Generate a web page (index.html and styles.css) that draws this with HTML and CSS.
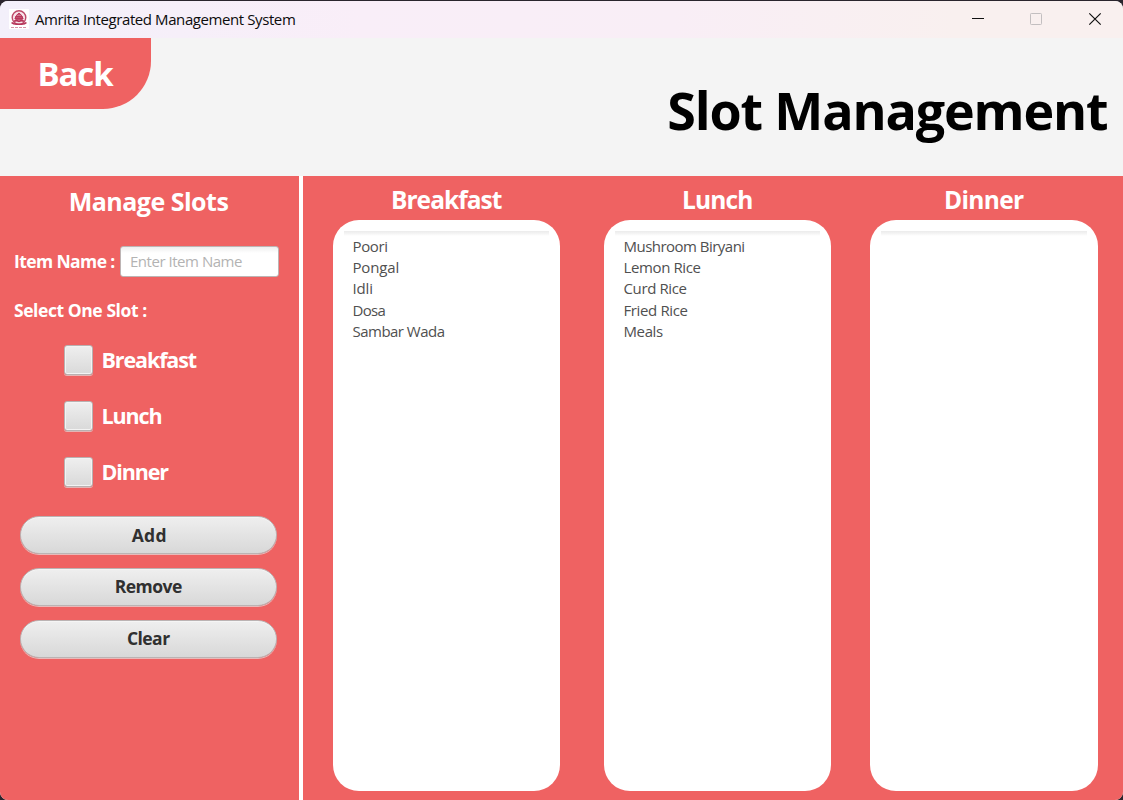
FILE: index.html
```html
<!DOCTYPE html>
<html lang="en">
<head>
<meta charset="utf-8">
<title>Amrita Integrated Management System</title>
<link rel="stylesheet" href="styles.css">
</head>
<body>
<div class="window">
  <header class="titlebar">
    <svg class="logo" width="20" height="20" viewBox="0 0 20 20">
      <rect width="20" height="20" fill="#fff"/>
      <circle cx="10" cy="8.600" r="6.800" fill="#f8e3e9" stroke="#bd4a69" stroke-width="1.400"/>
      <path d="M7 6.800 10 4l3 2.800M5.500 9.400h9M6.500 7.500h7v2.800h-7z" fill="#c25473" stroke="#b8375b" stroke-width="1"/>
      <path d="M5 12.200c2-.9 3.600-.7 5 .2 1.400-.9 3-1.100 5-.2M2.600 13.500c2 2.500 4.700 1.700 7.400 1.700s5.400.8 7.400-1.700" fill="none" stroke="#b5355a" stroke-width="1.600"/>
      <path d="M2 18.500h16" stroke="#d693a7" stroke-width="1" stroke-dasharray="3 1"/>
    </svg>
    <span class="app-name">Amrita Integrated Management System</span>
    <div class="controls">
      <svg width="14" height="14" viewBox="0 0 14 14"><path d="M1 6.500h12" stroke="#111" fill="none"/></svg>
      <svg width="14" height="14" viewBox="0 0 14 14"><rect x="1.500" y="1.500" width="11" height="11" rx=".8" stroke="#c3bfc0" fill="none"/></svg>
      <svg width="14" height="14" viewBox="0 0 14 14"><path d="M1.300 1.300l11.400 11.400M12.700 1.300L1.300 12.700" stroke="#111" stroke-width="1.200" fill="none"/></svg>
    </div>
  </header>
  <div class="banner">
    <button class="back">Back</button>
    <h1 class="page-title">Slot Management</h1>
  </div>
  <main class="content">
    <section class="manage">
      <h2 class="manage-title">Manage Slots</h2>
      <div class="field">
        <label class="label item-label" for="item">Item Name :</label>
        <input class="input" id="item" placeholder="Enter Item Name">
      </div>
      <p class="label select-label">Select One Slot :</p>
      <div class="options">
        <div class="option"><span class="box"></span><span>Breakfast</span></div>
        <div class="option"><span class="box"></span><span>Lunch</span></div>
        <div class="option"><span class="box"></span><span>Dinner</span></div>
      </div>
      <div class="actions">
        <button class="action add">Add</button>
        <button class="action">Remove</button>
        <button class="action">Clear</button>
      </div>
    </section>
    <section class="slots">
      <div class="slot breakfast">
        <h2 class="slot-title">Breakfast</h2>
        <div class="card">
          <ul class="items">
            <li>Poori</li>
            <li class="near">Pongal</li>
            <li class="near">Idli</li>
            <li class="tight">Dosa</li>
            <li class="snug">Sambar Wada</li>
          </ul>
        </div>
      </div>
      <div class="slot lunch">
        <h2 class="slot-title">Lunch</h2>
        <div class="card">
          <ul class="items">
            <li class="snug">Mushroom Biryani</li>
            <li>Lemon Rice</li>
            <li>Curd Rice</li>
            <li>Fried Rice</li>
            <li>Meals</li>
          </ul>
        </div>
      </div>
      <div class="slot dinner">
        <h2 class="slot-title">Dinner</h2>
        <div class="card"><ul class="items"></ul></div>
      </div>
    </section>
  </main>
</div>
</body>
</html>
```

FILE: styles.css
```css
* { box-sizing: border-box; }

body {
  margin: 0;
  height: 800px;
  padding-top: 1px;
  overflow: hidden;
  background: #2a252d;
  font-family: "Open Sans", "Noto Sans", sans-serif;
}

h1, h2, p, ul { margin: 0; padding: 0; }

button { font-family: inherit; cursor: pointer; }

.window {
  display: flex;
  flex-direction: column;
  height: 799px;
  border-radius: 8px;
  overflow: hidden;
  background: #f4f4f4;
}

/* Title bar */
.titlebar {
  display: flex;
  align-items: center;
  flex: none;
  height: 37px;
  padding: 0 21px 1px 9px;
  background: linear-gradient(90deg, #f3f0fa 0%, #f9eef8 32%, #f9eef6 60%, #f9f0ef 85%, #f9f0ef 100%);
}

.logo { margin-right: 6px; }

.app-name {
  font-size: 15px;
  line-height: 20px;
  letter-spacing: -.41px;
  color: #0c0c0c;
}

.controls {
  display: flex;
  gap: 44px;
  margin-left: auto;
  padding-bottom: 1px;
}

.controls svg { display: block; }
.controls svg:last-child { margin-left: 1px; }

/* Banner */
.banner {
  display: flex;
  justify-content: space-between;
  flex: none;
  height: 137.500px;
  padding-right: 15.500px;
}

.back {
  width: 151.400px;
  height: 71.400px;
  padding: 0 1.500px 0 0;
  border: 0;
  border-radius: 0 0 48px 0;
  background: #ef6262;
  color: #fff;
  font-size: 33px;
  font-weight: 700;
  line-height: 44px;
  letter-spacing: -1.100px;
}

.page-title {
  padding-top: 37px;
  font-size: 52px;
  font-weight: 700;
  line-height: 70px;
  letter-spacing: -1.150px;
  color: #000;
}

/* Body */
.content {
  display: flex;
  flex: 1;
}

.manage {
  width: 303px;
  padding: 10.500px 20px 0 14px;
  border-right: 4px solid #fff;
  background: #ef6262;
  color: #fff;
}

.manage-title {
  margin-left: -2px;
  margin-right: -6px;
  font-size: 25px;
  font-weight: 700;
  line-height: 30px;
  letter-spacing: -.5px;
  text-align: center;
}

.field {
  display: flex;
  align-items: center;
  height: 32px;
  margin-top: 29px;
}

.label {
  flex: none;
  width: 106px;
  font-size: 17.500px;
  font-weight: 700;
  line-height: 24px;
  letter-spacing: -.5px;
  white-space: nowrap;
}

.item-label { padding-bottom: 1px; letter-spacing: -.6px; }

.input {
  width: 159px;
  height: 31px;
  padding: 0 9px;
  border: 1px solid #bdb4b4;
  border-radius: 3px;
  background: linear-gradient(#eee 0, #fff 6px);
  font: 400 15px/20px "Open Sans", "Noto Sans", sans-serif;
  letter-spacing: -.47px;
  outline: 0;
}

.input::placeholder { color: #b3b3b3; opacity: 1; }

.select-label { margin-top: 21px; letter-spacing: -.43px; }

.options {
  display: flex;
  flex-direction: column;
  gap: 26px;
  margin: 23px 0 0 49.500px;
}

.option {
  display: flex;
  align-items: center;
  gap: 9px;
  height: 30px;
  font-size: 21.500px;
  font-weight: 700;
  line-height: 28px;
  letter-spacing: -1.120px;
}

.box {
  width: 29px;
  height: 30px;
  border: 1px solid #b9b1b1;
  border-radius: 3px;
  background: linear-gradient(#efefef, #d9d9d9);
  box-shadow: inset 0 0 0 1px #f3f3f3, 0 1px 0 #e3b5b5;
}

.actions {
  display: flex;
  flex-direction: column;
  gap: 13.700px;
  margin: 29.300px 2px 0 6px;
}

.action {
  width: 256.500px;
  height: 38px;
  padding: 0 0 1px;
  border: 1px solid #bbb3b3;
  border-radius: 19px;
  background: linear-gradient(#efefef, #d8d8d8);
  box-shadow: inset 0 1px 0 #f5f5f5, 0 1px 0 #e8b9b9;
  color: #303030;
  font-size: 17.500px;
  font-weight: 700;
  line-height: 24px;
  letter-spacing: -.55px;
}

.add { letter-spacing: .2px; padding-left: 2px; }

/* Slot lists */
.slots {
  display: flex;
  flex: 1;
  padding: 7.500px 25.500px 9.500px 29.500px;
  background: #ef6262;
}

.slot {
  display: flex;
  flex-direction: column;
  width: 227.500px;
}

.lunch { margin-left: 43.500px; }
.dinner { margin-left: 39px; }

.slot-title {
  height: 37.200px;
  padding-top: .5px;
  font-size: 24.500px;
  font-weight: 700;
  line-height: 32px;
  letter-spacing: -.85px;
  text-align: center;
  color: #fff;
}

.breakfast .slot-title { padding-top: 1px; letter-spacing: -.95px; }
.dinner .slot-title { letter-spacing: -.65px; }

.card {
  flex: 1;
  padding: 10.800px 11px 0;
  border-radius: 26px;
  background: #fff;
}

.items {
  padding: 5px 9px 0;
  background: linear-gradient(#ebebeb, #f2f2f2 2px, #fff 5px) no-repeat 0 0 / 100% 5px;
  list-style: none;
  font-size: 15px;
  line-height: 21.200px;
  letter-spacing: -.38px;
  color: #505050;
  min-height: 5px;
}

.near { letter-spacing: -.15px; }
.snug { letter-spacing: -.52px; }
.tight { letter-spacing: -.65px; }
```
